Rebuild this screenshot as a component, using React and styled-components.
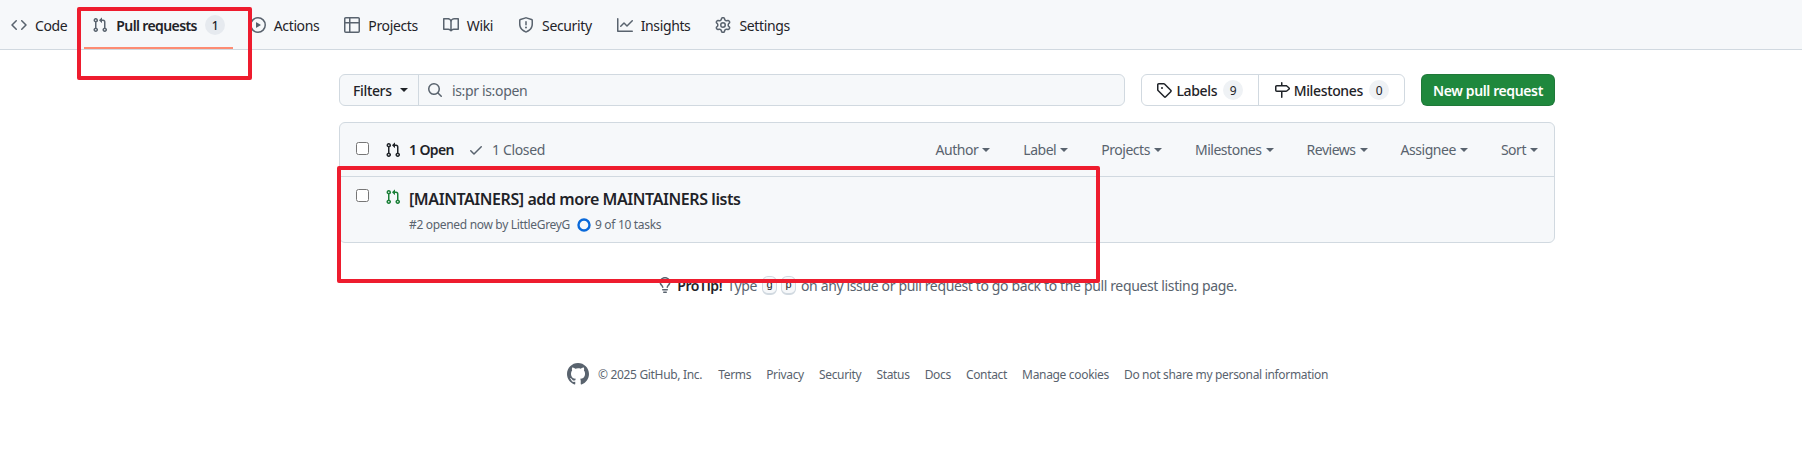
import React from "react";
import styled, { createGlobalStyle } from "styled-components";

const FONT = `"Noto Sans", "Open Sans", sans-serif`;

const PATHS = {
  code: "m11.28 3.22 4.25 4.25a.75.75 0 0 1 0 1.06l-4.25 4.25a.749.749 0 0 1-1.275-.326.749.749 0 0 1 .215-.734L13.94 8l-3.72-3.72a.749.749 0 0 1 .326-1.275.749.749 0 0 1 .734.215Zm-6.56 0a.751.751 0 0 1 1.042.018.751.751 0 0 1 .018 1.042L2.06 8l3.72 3.72a.749.749 0 0 1-.326 1.275.749.749 0 0 1-.734-.215L.47 8.53a.75.75 0 0 1 0-1.06Z",
  pr: "M1.5 3.25a2.25 2.25 0 1 1 3 2.122v5.256a2.251 2.251 0 1 1-1.5 0V5.372A2.25 2.25 0 0 1 1.5 3.25Zm5.677-.177L9.573.677A.25.25 0 0 1 10 .854V2.5h1A2.5 2.5 0 0 1 13.5 5v5.628a2.251 2.251 0 1 1-1.5 0V5a1 1 0 0 0-1-1h-1v1.646a.25.25 0 0 1-.427.177L7.177 3.427a.25.25 0 0 1 0-.354ZM3.75 2.5a.75.75 0 1 0 0 1.5.75.75 0 0 0 0-1.5Zm0 9.5a.75.75 0 1 0 0 1.5.75.75 0 0 0 0-1.5Zm8.25.75a.75.75 0 1 0 1.5 0 .75.75 0 0 0-1.5 0Z",
  play: "M8 0a8 8 0 1 1 0 16A8 8 0 0 1 8 0ZM1.5 8a6.5 6.5 0 1 0 13 0 6.5 6.5 0 0 0-13 0Zm4.879-2.773 4.264 2.559a.25.25 0 0 1 0 .428l-4.264 2.559A.25.25 0 0 1 6 10.559V5.442a.25.25 0 0 1 .379-.215Z",
  table: "M0 1.75C0 .784.784 0 1.75 0h12.5C15.216 0 16 .784 16 1.75v12.5A1.75 1.75 0 0 1 14.25 16H1.75A1.75 1.75 0 0 1 0 14.25ZM6.5 6.5v8h7.75a.25.25 0 0 0 .25-.25V6.5Zm8-1.5V1.75a.25.25 0 0 0-.25-.25H6.5V5Zm-13 1.5v7.75c0 .138.112.25.25.25H5v-8ZM5 5V1.5H1.75a.25.25 0 0 0-.25.25V5Z",
  book: "M0 1.75A.75.75 0 0 1 .75 1h4.253c1.227 0 2.317.59 3 1.501A3.743 3.743 0 0 1 11.006 1h4.245a.75.75 0 0 1 .75.75v10.5a.75.75 0 0 1-.75.75h-4.507a2.25 2.25 0 0 0-1.591.659l-.622.621a.75.75 0 0 1-1.06 0l-.622-.621A2.25 2.25 0 0 0 5.258 13H.75a.75.75 0 0 1-.75-.75Zm7.251 10.324.004-5.073-.002-2.253A2.25 2.25 0 0 0 5.003 2.5H1.5v9h3.757a3.75 3.75 0 0 1 1.994.574ZM8.755 4.75l-.004 7.322a3.752 3.752 0 0 1 1.992-.572H14.5v-9h-3.495a2.25 2.25 0 0 0-2.25 2.25Z",
  shield: "M7.467.133a1.748 1.748 0 0 1 1.066 0l5.25 1.68A1.75 1.75 0 0 1 15 3.48V7c0 1.566-.32 3.182-1.303 4.682-.983 1.498-2.585 2.813-5.032 3.855a1.697 1.697 0 0 1-1.33 0c-2.447-1.042-4.049-2.357-5.032-3.855C1.32 10.182 1 8.566 1 7V3.48a1.75 1.75 0 0 1 1.217-1.667Zm.61 1.429a.25.25 0 0 0-.153 0l-5.25 1.68a.25.25 0 0 0-.174.238V7c0 1.358.275 2.666 1.057 3.86.784 1.194 2.121 2.34 4.366 3.297a.196.196 0 0 0 .154 0c2.245-.956 3.582-2.104 4.366-3.298C13.225 9.666 13.5 8.36 13.5 7V3.48a.251.251 0 0 0-.174-.237l-5.25-1.68ZM8.75 4.75v3a.75.75 0 0 1-1.5 0v-3a.75.75 0 0 1 1.5 0ZM9 10.5a1 1 0 1 1-2 0 1 1 0 0 1 2 0Z",
  graph: "M1.5 1.75V13.5h13.75a.75.75 0 0 1 0 1.5H.75a.75.75 0 0 1-.75-.75V1.75a.75.75 0 0 1 1.5 0Zm14.28 2.53-5.25 5.25a.75.75 0 0 1-1.06 0L7 7.06 4.28 9.78a.751.751 0 0 1-1.042-.018.751.751 0 0 1-.018-1.042l3.25-3.25a.75.75 0 0 1 1.06 0L10 7.94l4.72-4.72a.751.751 0 0 1 1.042.018.751.751 0 0 1 .018 1.042Z",
  gear: "M8 0a8.2 8.2 0 0 1 .701.031C9.444.095 9.99.645 10.16 1.29l.288 1.107c.018.066.079.158.212.224.231.114.454.243.668.386.123.082.233.09.299.071l1.103-.303c.644-.176 1.392.021 1.82.63.27.385.506.792.704 1.218.315.675.111 1.422-.364 1.891l-.814.806c-.049.048-.098.147-.088.294.016.257.016.515 0 .772-.01.147.038.246.088.294l.814.806c.475.469.679 1.216.364 1.891a7.977 7.977 0 0 1-.704 1.217c-.428.61-1.176.807-1.82.63l-1.102-.302c-.067-.019-.177-.011-.3.071a5.909 5.909 0 0 1-.668.386c-.133.066-.194.158-.211.224l-.29 1.106c-.168.646-.715 1.196-1.458 1.26a8.006 8.006 0 0 1-1.402 0c-.743-.064-1.289-.614-1.458-1.26l-.289-1.106c-.018-.066-.079-.158-.212-.224a5.738 5.738 0 0 1-.668-.386c-.123-.082-.233-.09-.299-.071l-1.103.303c-.644.176-1.392-.021-1.82-.63a8.12 8.12 0 0 1-.704-1.218c-.315-.675-.111-1.422.363-1.891l.815-.806c.05-.048.098-.147.088-.294a6.214 6.214 0 0 1 0-.772c.01-.147-.038-.246-.088-.294l-.815-.806C.635 6.045.431 5.298.746 4.623a7.92 7.92 0 0 1 .704-1.217c.428-.61 1.176-.807 1.82-.63l1.102.302c.067.019.177.011.3-.071.214-.143.437-.272.668-.386.133-.066.194-.158.211-.224l.29-1.106C6.009.645 6.556.095 7.299.03 7.53.01 7.764 0 8 0Zm-.571 1.525c-.036.003-.108.036-.137.146l-.289 1.105c-.147.561-.549.967-.998 1.189-.173.086-.34.183-.5.29-.417.278-.97.423-1.529.27l-1.103-.303c-.109-.03-.175.016-.195.045-.22.312-.412.644-.573.99-.014.031-.021.11.059.19l.815.806c.411.406.562.957.53 1.456a4.709 4.709 0 0 0 0 .582c.032.499-.119 1.05-.53 1.456l-.815.806c-.081.08-.073.159-.059.19.162.346.353.677.573.989.02.03.085.076.195.046l1.102-.303c.56-.153 1.113-.008 1.53.27.161.107.328.204.501.29.447.222.85.629.997 1.189l.289 1.105c.029.109.101.143.137.146a6.6 6.6 0 0 0 1.142 0c.036-.003.108-.036.137-.146l.289-1.105c.147-.561.549-.967.998-1.189.173-.086.34-.183.5-.29.417-.278.97-.423 1.529-.27l1.103.303c.109.029.175-.016.195-.045.22-.313.411-.644.573-.99.014-.031.021-.11-.059-.19l-.815-.806c-.411-.406-.562-.957-.53-1.456a4.709 4.709 0 0 0 0-.582c-.032-.499.119-1.05.53-1.456l.815-.806c.081-.08.073-.159.059-.19a6.464 6.464 0 0 0-.573-.989c-.02-.03-.085-.076-.195-.046l-1.102.303c-.56.153-1.113.008-1.53-.27a4.44 4.44 0 0 0-.501-.29c-.447-.222-.85-.629-.997-1.189l-.289-1.105c-.029-.11-.101-.143-.137-.146a6.6 6.6 0 0 0-1.142 0ZM11 8a3 3 0 1 1-6 0 3 3 0 0 1 6 0ZM9.5 8a1.5 1.5 0 1 0-3.001.001A1.5 1.5 0 0 0 9.5 8Z",
  tag: "M1 7.775V2.75C1 1.784 1.784 1 2.75 1h5.025c.464 0 .91.184 1.238.513l6.25 6.25a1.75 1.75 0 0 1 0 2.474l-5.026 5.026a1.75 1.75 0 0 1-2.474 0l-6.25-6.25A1.752 1.752 0 0 1 1 7.775Zm1.5 0c0 .066.026.13.073.177l6.25 6.25a.25.25 0 0 0 .354 0l5.025-5.025a.25.25 0 0 0 0-.354l-6.25-6.25a.25.25 0 0 0-.177-.073H2.75a.25.25 0 0 0-.25.25ZM6 5a1 1 0 1 1 0 2 1 1 0 0 1 0-2Z",
  milestone: "M7.75 0a.75.75 0 0 1 .75.75V3h3.634c.414 0 .814.147 1.13.414l2.07 1.75a1.75 1.75 0 0 1 0 2.672l-2.07 1.75a1.75 1.75 0 0 1-1.13.414H8.5v5.25a.75.75 0 0 1-1.5 0V10H2.75A1.75 1.75 0 0 1 1 8.25v-3.5C1 3.784 1.784 3 2.75 3H7V.75A.75.75 0 0 1 7.75 0Zm4.384 8.5a.25.25 0 0 0 .161-.06l2.07-1.75a.248.248 0 0 0 0-.38l-2.07-1.75a.25.25 0 0 0-.161-.06H2.75a.25.25 0 0 0-.25.25v3.5c0 .138.112.25.25.25h9.384Z",
  search: "M10.68 11.74a6 6 0 0 1-7.922-8.982 6 6 0 0 1 8.982 7.922l3.04 3.04a.749.749 0 0 1-.326 1.275.749.749 0 0 1-.734-.215ZM11.5 7a4.499 4.499 0 1 0-8.997 0A4.499 4.499 0 0 0 11.5 7Z",
  check: "M13.78 4.22a.75.75 0 0 1 0 1.06l-7.25 7.25a.75.75 0 0 1-1.06 0L2.22 9.28a.751.751 0 0 1 .018-1.042.751.751 0 0 1 1.042-.018L6 10.94l6.72-6.72a.75.75 0 0 1 1.06 0Z",
  bulb: "M8 1.5c-2.363 0-4 1.69-4 3.75 0 .984.424 1.625.984 2.304l.214.253c.223.264.47.556.673.848.284.411.537.896.621 1.49a.75.75 0 0 1-1.484.211c-.04-.282-.163-.547-.37-.847a8.456 8.456 0 0 0-.542-.68c-.084-.1-.173-.205-.268-.32C3.201 7.75 2.5 6.766 2.5 5.25 2.5 2.31 4.863 0 8 0s5.5 2.31 5.5 5.25c0 1.516-.701 2.5-1.328 3.259-.095.115-.184.22-.268.319-.207.245-.383.453-.541.681-.208.3-.33.565-.37.847a.751.751 0 0 1-1.485-.212c.084-.593.337-1.078.621-1.489.203-.292.45-.584.673-.848.075-.088.147-.173.213-.253.561-.679.985-1.32.985-2.304 0-2.06-1.637-3.75-4-3.75ZM5.75 12h4.5a.75.75 0 0 1 0 1.5h-4.5a.75.75 0 0 1 0-1.5ZM6 15.25a.75.75 0 0 1 .75-.75h2.5a.75.75 0 0 1 0 1.5h-2.5a.75.75 0 0 1-.75-.75Z",
};
const GITHUB = "M12 1C5.923 1 1 5.923 1 12c0 4.867 3.149 8.979 7.521 10.436.55.096.756-.233.756-.522 0-.262-.013-1.128-.013-2.049-2.764.509-3.479-.674-3.699-1.292-.124-.317-.66-1.293-1.127-1.554-.385-.207-.936-.715-.014-.729.866-.014 1.485.797 1.691 1.128.99 1.663 2.571 1.196 3.204.907.096-.715.385-1.196.701-1.471-2.448-.275-5.005-1.224-5.005-5.432 0-1.196.426-2.186 1.128-2.956-.111-.275-.496-1.402.11-2.915 0 0 .921-.288 3.024 1.128a10.193 10.193 0 0 1 2.75-.371c.936 0 1.871.123 2.75.371 2.104-1.43 3.025-1.128 3.025-1.128.605 1.513.221 2.64.111 2.915.701.77 1.127 1.747 1.127 2.956 0 4.222-2.571 5.157-5.019 5.432.399.344.743 1.004.743 2.035 0 1.471-.014 2.654-.014 3.115 0 .289.206.632.756.522C19.851 20.979 23 16.854 23 12c0-6.077-4.922-11-11-11Z";

const Icon = ({ name }) => (
  <svg width="16" height="16" viewBox="0 0 16 16" fill="currentColor" aria-hidden="true"><path d={PATHS[name]} /></svg>
);

const Global = createGlobalStyle`
  html, body { margin: 0; padding: 0; background: #fff; height: 462px; overflow: hidden; }
  body { font-family: ${FONT}; color: #1f2328; font-size: 14px; letter-spacing: -0.35px; }
  * { box-sizing: border-box; }
`;

const Page = styled.div`position: relative; width: 1802px; height: 462px; overflow: hidden;`;

const TabBar = styled.nav`
  display: flex; align-items: flex-start; gap: 9px;
  height: 50px; padding: 9px 0 0 3px;
  background: #f6f8fa; border-bottom: 1px solid #d1d9e0;
`;
const Tab = styled.a`
  position: relative; display: flex; align-items: center; gap: 8px;
  height: 32px; padding: 0 8px; color: #1f2328; white-space: nowrap;
  font-weight: ${p => (p.$active ? 600 : 400)};
  letter-spacing: ${p => (p.$active ? "-0.62px" : "-0.37px")};
  svg { color: #59636e; flex: none; }
  ${p => p.$active && `&::after { content: ""; position: absolute; left: 0; right: 0; bottom: -8px; height: 2px; background: #fd8c73; }`}
`;
const Counter = styled.span`
  display: inline-flex; align-items: center; justify-content: center;
  min-width: 20px; height: 20px; padding: 0 6px; border-radius: 10px;
  background: #e6eaef; color: #1f2328; font-size: 12px; font-weight: 500;
`;

const Main = styled.main`width: 1216px; margin-left: 339px; padding-top: 24px;`;
const Toolbar = styled.div`display: flex; height: 32px;`;
const FilterGroup = styled.div`
  display: flex; width: 786px; height: 32px; margin-right: 16px;
  border: 1px solid #d1d9e0; border-radius: 6px; background: #f6f8fa; overflow: hidden;
`;
const FilterButton = styled.div`
  display: flex; align-items: center; gap: 8px; width: 79px; padding-left: 13px;
  border-right: 1px solid #d1d9e0; font-weight: 500;
`;
const Caret = styled.span`
  display: inline-block; width: 0; height: 0;
  border-left: 4px solid transparent; border-right: 4px solid transparent; border-top: 4px solid currentColor;
`;
const SearchBox = styled.div`
  display: flex; align-items: center; gap: 9px; padding-left: 8px; color: #59636e;
`;
const NavGroup = styled.div`
  display: flex; width: 264px; height: 32px; margin-right: 16px;
  border: 1px solid #d1d9e0; border-radius: 6px; background: #fff;
`;
const NavItem = styled.div`
  display: flex; align-items: center; justify-content: center; gap: 4px;
  width: ${p => p.$w}px; font-weight: 500;
  & + & { border-left: 1px solid #d1d9e0; }
  svg { flex: none; }
`;
const SmallCounter = styled(Counter)`background: #eff2f5; margin-left: 2px; font-weight: 400;`;
const NewButton = styled.button`
  width: 134px; height: 32px; border: 1px solid rgba(31,35,40,.15); border-radius: 6px;
  background: #1f883d; color: #fff; font: 600 14px ${FONT}; letter-spacing: -0.38px; padding: 0;
`;

const Box = styled.section`
  margin-top: 16px; border: 1px solid #d1d9e0; border-radius: 6px; background: #f6f8fa;
`;
const BoxHeader = styled.div`
  display: flex; align-items: center; height: 54px; padding: 0 16px;
  border-bottom: 1px solid #d1d9e0;
`;
const Check = styled.input.attrs({ type: "checkbox" })`margin: 0; width: 13px; height: 13px; flex: none;`;
const HeaderCheck = styled(Check)`margin-bottom: 2px;`;
const StateLink = styled.span`
  display: flex; align-items: center; gap: 8px; margin-right: 14px;
  color: ${p => (p.$on ? "#1f2328" : "#59636e")};
  font-weight: ${p => (p.$on ? 600 : 400)};
  letter-spacing: ${p => (p.$on ? "-0.6px" : "-0.35px")};
  svg { flex: none; }
`;
const States = styled.div`display: flex; margin-left: 16px;`;
const Sorts = styled.div`display: flex; gap: 33px; margin-left: auto;`;
const Sort = styled.span`
  display: flex; align-items: center; gap: 4px; color: #59636e; white-space: nowrap; letter-spacing: -0.47px;
`;
const Row = styled.div`display: flex; height: 65px; padding: 12px 16px 0;`;
const RowIcon = styled.span`display: block; margin: 0 8px 0 16px; color: #1a7f37; height: 16px;`;
const Title = styled.div`font-size: 16px; font-weight: 600; line-height: 20px; letter-spacing: -0.42px; white-space: nowrap;`;
const Meta = styled.div`
  display: flex; align-items: center; margin-top: 7px; font-size: 12px; line-height: 18px; letter-spacing: -0.32px;
  color: #59636e; white-space: nowrap;
`;
const Ring = styled.svg`margin: 0 4px 0 7px;`;

const Tip = styled.div`
  display: flex; align-items: center; justify-content: center; margin-top: 32px; height: 20px;
  color: #59636e; white-space: pre; letter-spacing: -0.36px;
  svg { margin-right: 4px; }
`;
const Kbd = styled.kbd`
  display: inline-flex; align-items: center; justify-content: center;
  width: 15px; height: 19px; margin: 0 2px; font: 11px "Liberation Mono", monospace; color: #1f2328;
  background: #f6f8fa; border: 1px solid #d1d9e0; border-bottom-width: 2px; border-radius: 6px;
`;
const TipStrong = styled.strong`color: #1f2328; margin-right: 5px; font-weight: 600;`;
const TipKeys = styled.span`display: flex; margin: 0 3px;`;

const Footer = styled.footer`
  display: flex; align-items: center; justify-content: center; margin-top: 67px;
  font-size: 12px; color: #59636e; letter-spacing: -0.32px; white-space: nowrap;
`;
const Logo = styled.svg`display: block; margin-right: 8px; fill: #59636e;`;
const FooterLinks = styled.div`display: flex; gap: 15px; margin-left: 16px;`;

const Mark = styled.div`
  position: absolute; pointer-events: none; border: 4px solid #ee1c2e; border-radius: 2px;
  left: ${p => p.$l}px; top: ${p => p.$t}px; width: ${p => p.$w}px; height: ${p => p.$h}px;
`;

const tabs = [
  ["code", "Code"], ["pr", "Pull requests", "1"], ["play", "Actions"], ["table", "Projects"],
  ["book", "Wiki"], ["shield", "Security"], ["graph", "Insights"], ["gear", "Settings"],
];
const sorts = ["Author", "Label", "Projects", "Milestones", "Reviews", "Assignee", "Sort"];
const links = ["Terms", "Privacy", "Security", "Status", "Docs", "Contact", "Manage cookies", "Do not share my personal information"];

export default function App() {
  return (
    <Page>
      <Global />
      <TabBar>
        {tabs.map(([icon, label, c]) => (
          <Tab key={label} $active={!!c}>
            <Icon name={icon} />
            {label}
            {c && <Counter>{c}</Counter>}
          </Tab>
        ))}
      </TabBar>
      <Main>
        <Toolbar>
          <FilterGroup>
            <FilterButton>Filters <Caret /></FilterButton>
            <SearchBox><Icon name="search" />is:pr is:open</SearchBox>
          </FilterGroup>
          <NavGroup>
            <NavItem $w={116}><Icon name="tag" />Labels <SmallCounter>9</SmallCounter></NavItem>
            <NavItem $w={147}><Icon name="milestone" />Milestones <SmallCounter>0</SmallCounter></NavItem>
          </NavGroup>
          <NewButton>New pull request</NewButton>
        </Toolbar>
        <Box>
          <BoxHeader>
            <HeaderCheck />
            <States>
              <StateLink $on><Icon name="pr" />1 Open</StateLink>
              <StateLink><Icon name="check" />1 Closed</StateLink>
            </States>
            <Sorts>
              {sorts.map(s => <Sort key={s}>{s} <Caret /></Sort>)}
            </Sorts>
          </BoxHeader>
          <Row>
            <Check />
            <RowIcon><Icon name="pr" /></RowIcon>
            <div>
              <Title>[MAINTAINERS] add more MAINTAINERS lists</Title>
              <Meta>
                #2 opened now by LittleGreyG
                <Ring width="14" height="14" viewBox="0 0 14 14">
                  <circle cx="7" cy="7" r="5.5" fill="none" stroke="#0969da" strokeWidth="2.4" />
                </Ring>
                9 of 10 tasks
              </Meta>
            </div>
          </Row>
        </Box>
        <Tip>
          <Icon name="bulb" />
          <TipStrong>ProTip!</TipStrong>Type<TipKeys><Kbd>g</Kbd> <Kbd>p</Kbd></TipKeys>on any issue or pull request to go back to the pull request listing page.
        </Tip>
        <Footer>
          <Logo width="24" height="24" viewBox="0 0 24 24"><path d={GITHUB} /></Logo>
          © 2025 GitHub, Inc.
          <FooterLinks>{links.map(l => <span key={l}>{l}</span>)}</FooterLinks>
        </Footer>
      </Main>
      <Mark $l={77} $t={7} $w={175} $h={73} />
      <Mark $l={337} $t={166} $w={763} $h={117} />
    </Page>
  );
}
